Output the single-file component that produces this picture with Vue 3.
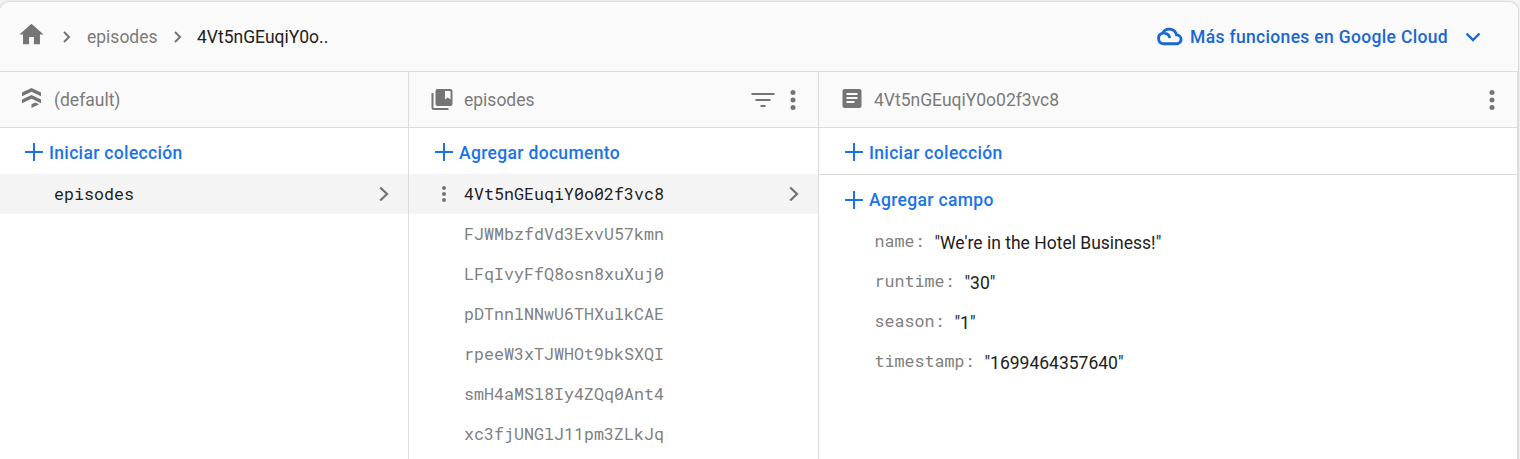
<script setup>
const documents = [
  '4Vt5nGEuqiY0o02f3vc8',
  'FJWMbzfdVd3ExvU57kmn',
  'LFqIvyFfQ8osn8xuXuj0',
  'pDTnnlNNwU6THXulkCAE',
  'rpeeW3xTJWHOt9bkSXQI',
  'smH4aMSl8Iy4ZQq0Ant4',
  'xc3fjUNGlJ11pm3ZLkJq',
]
const fields = [
  { key: 'name', value: "We're in the Hotel Business!" },
  { key: 'runtime', value: '30' },
  { key: 'season', value: '1' },
  { key: 'timestamp', value: '1699464357640' },
]
</script>

<template>
  <div class="page">
    <div class="card">
      <header class="topbar">
        <svg class="home" viewBox="0 0 24 24"><path d="M10 20v-6h4v6h5v-8h3L12 3 2 12h3v8z" /></svg>
        <svg class="sep first" viewBox="0 0 8 12"><path class="line" d="M1 1l5 5-5 5" /></svg>
        <span class="crumb">episodes</span>
        <svg class="sep second" viewBox="0 0 8 12"><path class="line" d="M1 1l5 5-5 5" /></svg>
        <span class="crumb current">4Vt5nGEuqiY0o..</span>
        <a class="cloud">
          <svg class="cloud-icon" viewBox="0 0 26 18">
            <path d="M7 16a5.200 5.200 0 0 1-.6-10.200A7.100 7.100 0 0 1 19.700 7.400A4.350 4.350 0 0 1 20.700 16zM8 6.200c3-.3 4.800 1.400 5.200 4.300" />
          </svg>
          <span class="cloud-text">Más funciones en Google Cloud</span>
          <svg class="down" viewBox="0 0 16 10"><path d="M1.500 1.500L8 8l6.500-6.500" /></svg>
        </a>
      </header>

      <div class="columns">
        <section class="col">
          <div class="head">
            <svg class="head-icon database" viewBox="0 0 22 22">
              <path d="M1 5.500L10.500 1 20 5.500V9.200L10.500 4.700 1 9.200zM1 12.500L10.500 8 20 12.500V16.200L10.500 11.700 1 16.200zM10.500 17.300L14.300 15.400 18.200 17.200 10.500 21z" />
            </svg>
            <span class="title">(default)</span>
          </div>
          <button class="add"><svg viewBox="0 0 18 18"><path d="M9 0v18M0 9h18" /></svg><span>Iniciar colección</span></button>
          <div class="row selected">
            <span class="id">episodes</span>
            <svg class="chev" viewBox="0 0 10 16"><path class="line" d="M1.200 1.500L8 8l-6.800 6.500" /></svg>
          </div>
        </section>

        <section class="col inset">
          <div class="head">
            <svg class="head-icon" viewBox="0 0 22 22">
              <path d="M6.500 0h13a2 2 0 0 1 2 2v13a2 2 0 0 1-2 2h-13a2 2 0 0 1-2-2V2a2 2 0 0 1 2-2zM14 2v8.500l2.750-2 2.750 2V2zM.5 4h2v15h15v2h-15a2 2 0 0 1-2-2z" fill-rule="evenodd" />
            </svg>
            <span class="title">episodes</span>
            <svg class="filter" viewBox="0 0 24 16"><path d="M.5 1h23v2H.5zM4.500 7h15v2h-15zM9.500 13h5v2h-5z" /></svg>
            <svg class="dots" viewBox="0 0 6 20"><circle cx="3" cy="2.500" r="2.500" /><circle cx="3" cy="10" r="2.500" /><circle cx="3" cy="17.500" r="2.500" /></svg>
          </div>
          <button class="add"><svg viewBox="0 0 18 18"><path d="M9 0v18M0 9h18" /></svg><span>Agregar documento</span></button>
          <div v-for="(doc, i) in documents" :key="doc" class="row" :class="{ selected: i === 0 }">
            <svg v-if="i === 0" class="dots small" viewBox="0 0 6 18"><circle cx="3" cy="3" r="2" /><circle cx="3" cy="9" r="2" /><circle cx="3" cy="15" r="2" /></svg>
            <span class="id">{{ doc }}</span>
            <svg v-if="i === 0" class="chev" viewBox="0 0 10 16"><path class="line" d="M1.200 1.500L8 8l-6.800 6.500" /></svg>
          </div>
        </section>

        <section class="col inset">
          <div class="head">
            <svg class="head-icon" viewBox="0 0 22 22">
              <path d="M3.500 0h15a2 2 0 0 1 2 2v15a2 2 0 0 1-2 2h-15a2 2 0 0 1-2-2V2a2 2 0 0 1 2-2zM5.500 4v2h11V4zM5.500 8v2h11V8zM5.500 12v2h8v-2z" fill-rule="evenodd" />
            </svg>
            <span class="title">4Vt5nGEuqiY0o02f3vc8</span>
            <svg class="dots" viewBox="0 0 6 20"><circle cx="3" cy="2.500" r="2.500" /><circle cx="3" cy="10" r="2.500" /><circle cx="3" cy="17.500" r="2.500" /></svg>
          </div>
          <button class="add ruled"><svg viewBox="0 0 18 18"><path d="M9 0v18M0 9h18" /></svg><span>Iniciar colección</span></button>
          <button class="add field-add"><svg viewBox="0 0 18 18"><path d="M9 0v18M0 9h18" /></svg><span>Agregar campo</span></button>
          <div v-for="f in fields" :key="f.key" class="field">
            <span class="key">{{ f.key }}:</span>
            <span class="value">"{{ f.value }}"</span>
          </div>
        </section>
      </div>
    </div>
  </div>
</template>

<style>
body {
  background: #f1f2f4;
  overflow: hidden;
}
</style>

<style scoped>
* {
  box-sizing: border-box;
}
.page {
  width: 1520px;
  height: 459px;
  padding: 2px 2px 0 0;
  overflow: hidden;
  font-family: Roboto, sans-serif;
  font-size: 17.5px;
  font-weight: 400;
  color: #212121;
}
.card {
  height: 470px;
  background: #fff;
  border-radius: 9px 9px 0 0;
  box-shadow: 0 0 2px rgba(0, 0, 0, 0.35);
  overflow: hidden;
}
svg {
  display: block;
  flex: none;
  fill: #757575;
}
.line {
  fill: none;
  stroke: #757575;
  stroke-width: 2;
}
.topbar {
  height: 70px;
  display: flex;
  align-items: center;
  background: #fafafa;
  border-bottom: 1px solid #dcdcdc;
  padding: 0 37px 0 17px;
}
.home {
  width: 29px;
  height: 29px;
  margin-top: -5px;
}
.sep {
  width: 8px;
  height: 12px;
  margin-top: 1px;
}
.first {
  margin-left: 17px;
}
.second {
  margin-left: 17px;
}
.crumb {
  color: #7b7b7b;
  line-height: 24px;
  margin-left: 16px;
}
.first + .crumb {
  width: 70px;
}
.second + .crumb {
  margin-left: 15px;
}
.current {
  color: #212121;
}
.cloud {
  margin-left: auto;
  display: flex;
  align-items: center;
  color: #1967d2;
  font-weight: 500;
  letter-spacing: 0.33px;
}
.cloud svg {
  fill: none;
  stroke: #1967d2;
}
.cloud-icon {
  width: 27px;
  height: 19px;
  stroke-width: 2.700;
  margin-right: 7px;
}
.cloud-text {
  width: 258px;
  white-space: nowrap;
}
.down {
  width: 16px;
  height: 10px;
  stroke-width: 2.400;
  margin-left: 17px;
}
.columns {
  display: grid;
  grid-template-columns: 409px 410px 699px;
  height: 400px;
}
.col {
  border-right: 1px solid #dcdcdc;
}
.head {
  height: 56px;
  display: flex;
  align-items: center;
  background: #fafafa;
  border-bottom: 1px solid #dcdcdc;
  color: #7b7b7b;
  padding: 0 22px;
}
.head-icon {
  width: 22px;
  height: 22px;
  margin-right: 11px;
}
.database {
  margin-left: -1px;
  margin-top: -3px;
}
.title {
  margin-right: auto;
  padding-top: 1px;
}
.filter {
  width: 24px;
  height: 16px;
  margin-right: 15px;
}
.dots {
  width: 6px;
  height: 20px;
}
.add {
  display: flex;
  align-items: center;
  width: 100%;
  height: 46px;
  padding: 0 0 0 25px;
  border: 0;
  background: none;
  color: #1a73e8;
  font: 500 17.500px Roboto, sans-serif;
  letter-spacing: 0.33px;
}
.inset .add {
  padding-left: 26px;
}
.add span {
  padding-top: 4px;
}
.add svg {
  width: 18px;
  height: 18px;
  margin-right: 6px;
  margin-top: 2px;
  stroke: #1a73e8;
  stroke-width: 2;
}
.ruled {
  height: 47px;
  border-bottom: 1px solid #dcdcdc;
}
.row {
  height: 40px;
  display: flex;
  align-items: center;
  padding: 0 19px 0 32px;
  color: #808080;
}
.row .id {
  margin-left: 22px;
  margin-right: auto;
}
.inset .row .id {
  margin-left: 23px;
}
.row .small {
  width: 6px;
  height: 18px;
}
.inset .row .small + .id {
  margin-left: 17px;
}
.row.selected {
  background: #f4f4f4;
  color: #212121;
}
.id,
.key {
  font-family: "Roboto Mono", "Liberation Mono", monospace;
  font-size: 16.660px;
}
.chev {
  width: 10px;
  height: 16px;
}
.chev .line {
  stroke-width: 2.300;
}
.field-add {
  height: 47px;
}
.field-add span {
  padding-top: 2px;
}
.field {
  height: 40px;
  display: flex;
  align-items: center;
  padding-left: 55.500px;
}
.key {
  color: #808080;
  margin-right: 10px;
  padding-bottom: 2px;
}
.value {
  padding-top: 2px;
}
</style>
